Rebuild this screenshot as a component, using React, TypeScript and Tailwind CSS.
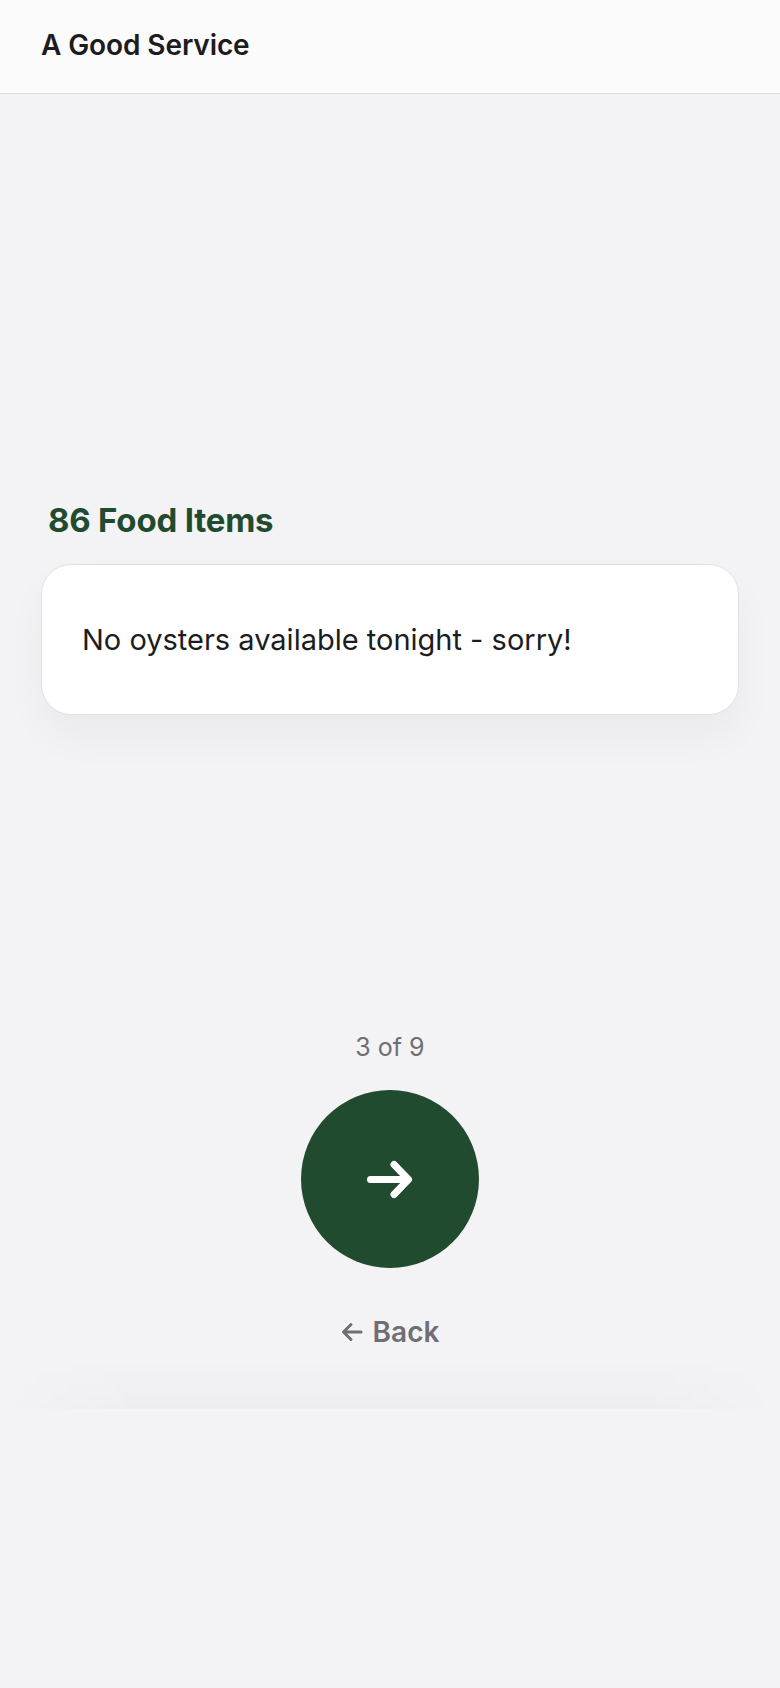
import React from "react";

export default function App() {
  return (
    <div className="min-h-screen w-full bg-[#f3f3f6] font-['Inter','Noto_Sans',sans-serif]">
      <header className="flex h-[94px] items-center border-b border-[#dcdce0] bg-[#fbfbfb] px-[41px] pb-[3px]">
        <h1 className="text-[28px] font-semibold leading-none tracking-[-0.1px] text-[#1c1c1e]">
          A Good Service
        </h1>
      </header>

      <main className="flex flex-col px-[41px]">
        <h2 className="ml-[7px] mt-[410px] text-[33px] font-bold leading-none tracking-[-0.2px] text-[#214b2e]">
          86 Food Items
        </h2>

        <section className="mt-[27px] flex h-[151px] items-center rounded-[30px] border border-[#e1e1e5] bg-white px-[40px] shadow-[0_22px_40px_rgba(0,0,0,0.04)]">
          <p className="text-[29px] font-normal leading-none text-[#1c1c1e]">
            No oysters available tonight - sorry!
          </p>
        </section>

        <div className="mt-[320px] flex flex-col items-center">
          <p className="text-[25px] leading-none text-[#6e6e73]">3 of 9</p>

          <button
            type="button"
            className="mt-[30px] flex h-[178px] w-[178px] items-center justify-center rounded-full bg-[#214b2e]"
            aria-label="Next"
          >
            <svg width="50" height="40" viewBox="0 0 50 40" fill="none">
              <path
                d="M5.5 20.5H42M29 5.5L43.5 20.5L29 35.5"
                stroke="white"
                strokeWidth="7"
                strokeLinecap="round"
                strokeLinejoin="round"
              />
            </svg>
          </button>

          <button
            type="button"
            className="mt-[50px] flex items-center gap-[10px] text-[28px] font-semibold leading-none text-[#6e6e73]"
          >
            <svg width="22" height="20" viewBox="0 0 22 20" fill="none">
              <path
                d="M20 10H3M10 2.5L2.5 10L10 17.5"
                stroke="#6e6e73"
                strokeWidth="3"
                strokeLinecap="round"
                strokeLinejoin="round"
              />
            </svg>
            <span>Back</span>
          </button>
        </div>

        <div className="-mx-[41px] mt-[12px] h-[51px] bg-[linear-gradient(to_bottom,rgba(0,0,0,0),rgba(0,0,0,0.02))] [mask-image:linear-gradient(to_right,transparent_0%,black_18%,black_82%,transparent_100%)]" />
      </main>
    </div>
  );
}
